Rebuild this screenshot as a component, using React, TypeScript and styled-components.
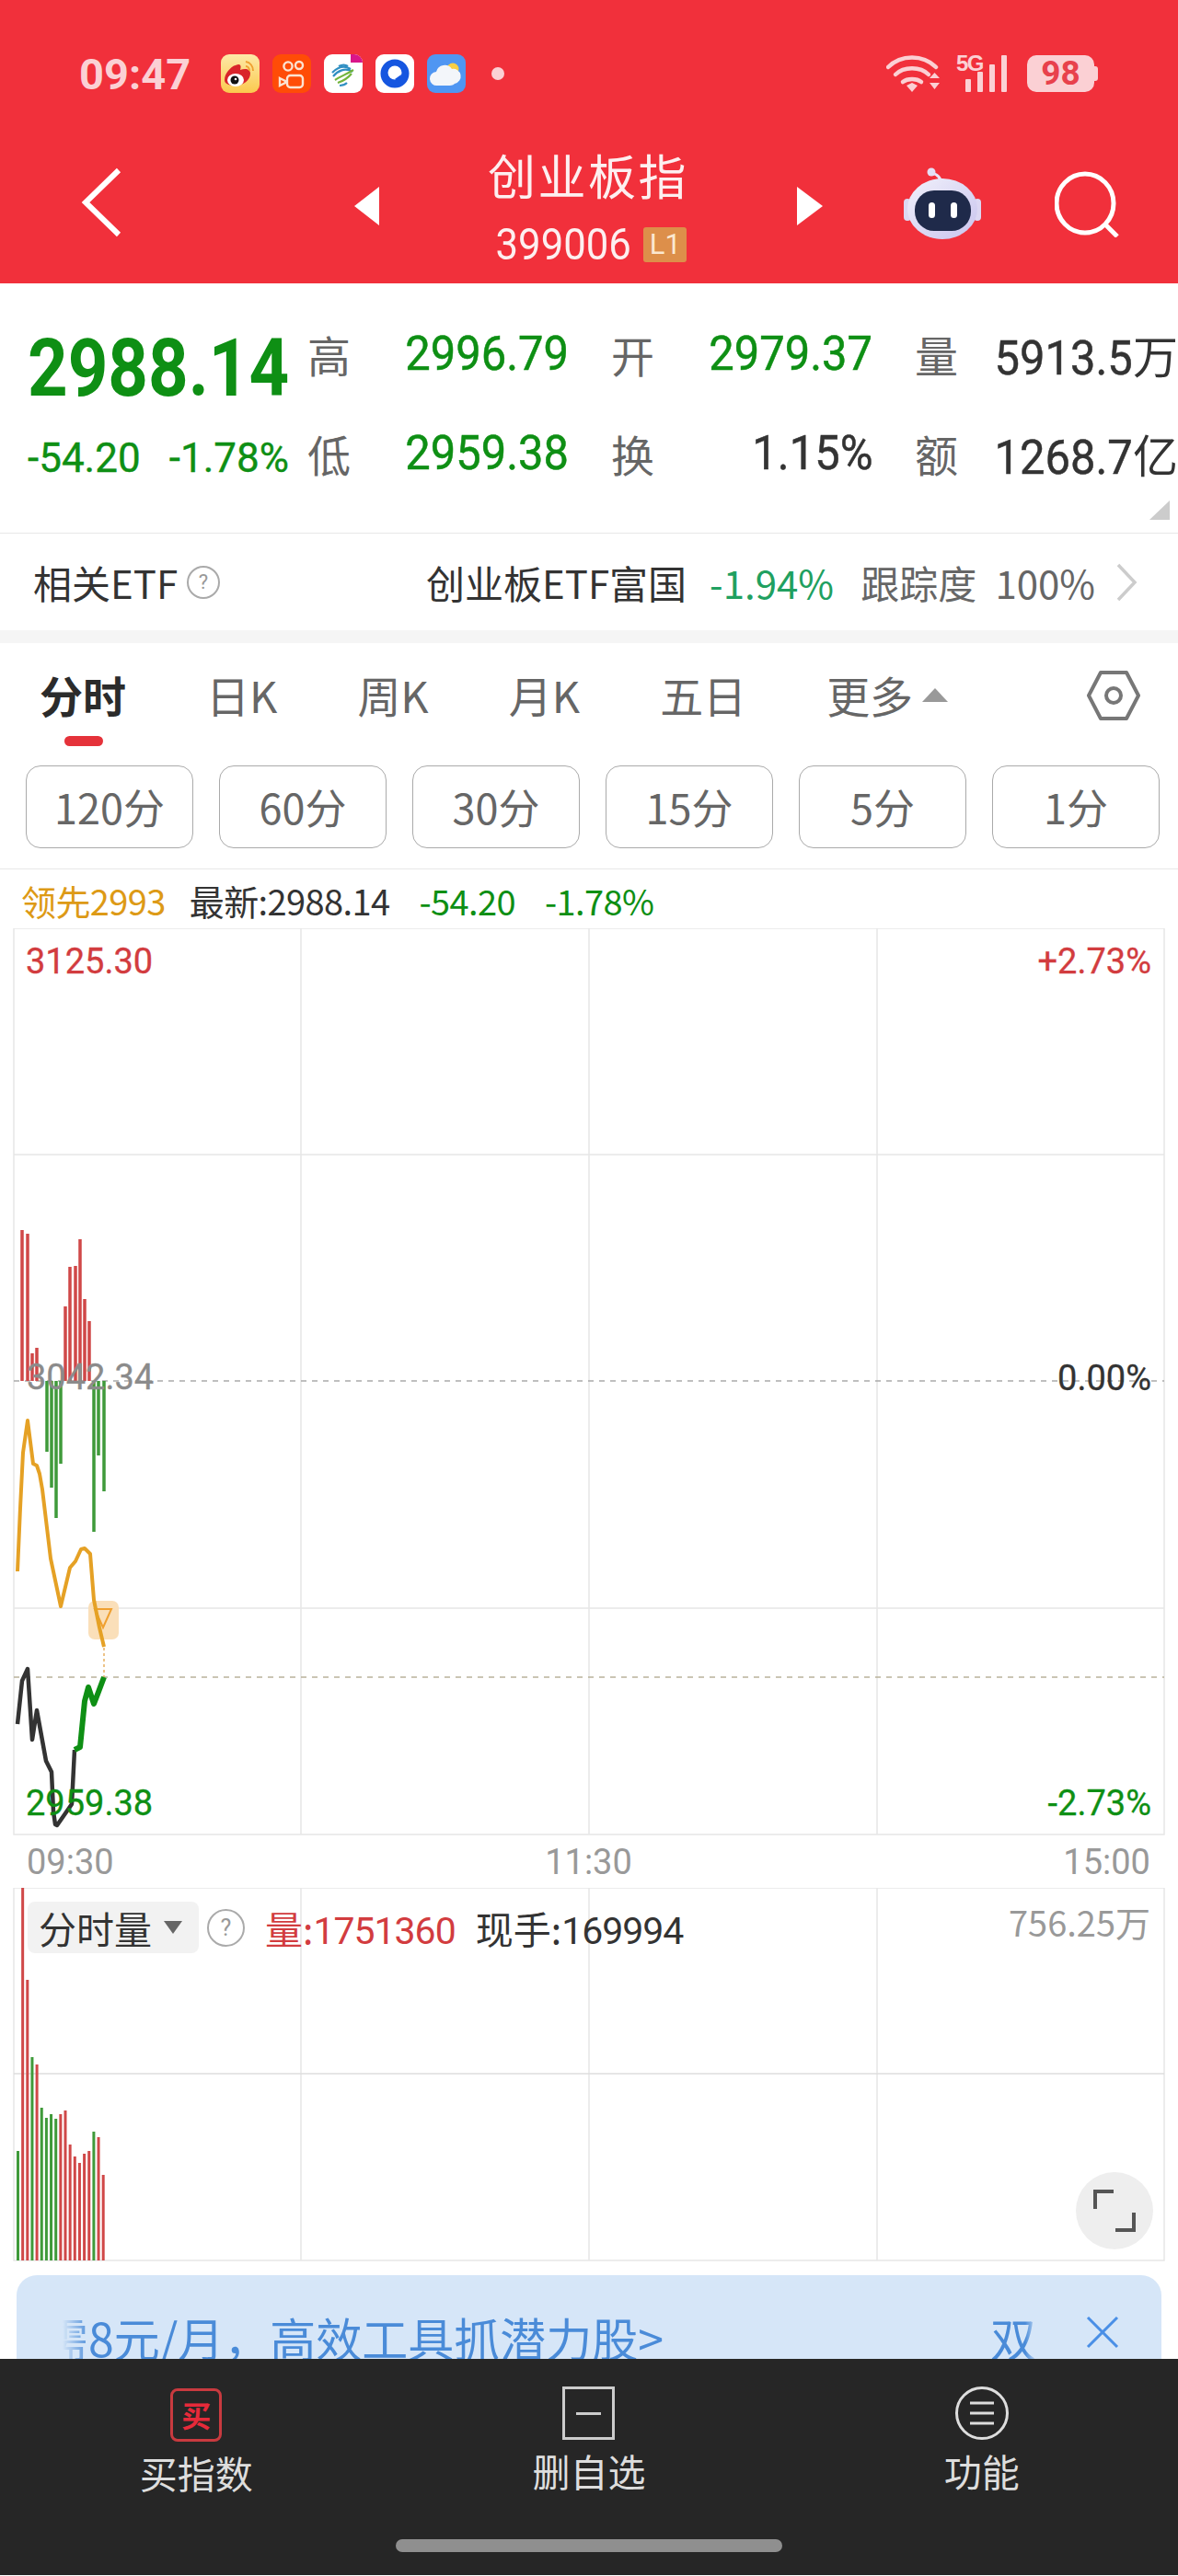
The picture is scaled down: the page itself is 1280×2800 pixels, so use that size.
import React from "react";
import styled, { createGlobalStyle } from "styled-components";

const CJK = `"Noto Sans CJK SC", "Noto Sans", sans-serif`;
const DIGITS = `Roboto, "Noto Sans CJK SC", sans-serif`;
const GREEN = "#0e8f14";
const RED = "#d23c3f";

const Global = createGlobalStyle`
  html, body { margin: 0; padding: 0; background: #fff; }
  body { font-family: ${CJK}; }
`;

const redBars = [
  [24, 1338], [30, 1342], [35, 1472], [40, 1466], [71, 1421],
  [76, 1378], [82, 1377], [87, 1348], [92, 1413], [97, 1437],
];
const greenBars = [
  [51, 1579], [56, 1618], [61, 1651], [66, 1592], [102, 1666], [107, 1583], [113, 1622],
];
const volBars: [string, number][] = [
  ["g", 2339], ["r", 2053], ["r", 2153], ["g", 2237], ["r", 2245], ["g", 2292], ["g", 2303],
  ["g", 2299], ["g", 2304], ["r", 2299], ["r", 2295], ["r", 2332], ["r", 2345], ["r", 2352],
  ["r", 2342], ["r", 2339], ["g", 2318], ["r", 2324], ["r", 2365],
];
const orangeLine =
  "19,1709 22,1640 25,1580 30,1545 36,1592 40,1594 43,1603 46,1620 55,1695 66,1747 76,1705 82,1698 88,1685 92,1684 98,1690 102,1740 108,1770 113,1791";
const blackLine =
  "19,1875 24,1828 30,1815 35,1892 40,1860 50,1915 56,1927 58,1970 60,1984 62,1985 78,1962 81,1903";
const greenLine = "81,1903 87,1900 92,1850 96,1835 102,1853 107,1840 113,1824";

const periods = ["120分", "60分", "30分", "15分", "5分", "1分"];

const WeiboIcon = () => (
  <svg width="42" height="42" viewBox="0 0 42 42">
    <defs>
      <linearGradient id="wb" x1="0" y1="0" x2="0" y2="1">
        <stop offset="0" stopColor="#fde9a8" />
        <stop offset="1" stopColor="#fbc94e" />
      </linearGradient>
    </defs>
    <rect width="42" height="42" rx="9" fill="url(#wb)" />
    <path d="M4 28c0-8 8-16 15-17 3 0 3 3 2 6 6-2 11-1 11 4 0 7-8 13-16 13-7 0-12-2-12-6z" fill="#d9242a" />
    <ellipse cx="16" cy="28" rx="9" ry="7" fill="#fff" />
    <circle cx="15" cy="28" r="4.5" fill="#111" />
    <circle cx="16" cy="27" r="1.3" fill="#fff" />
    <path d="M27 8c5 1 8 5 8 10M27 13c2 0 4 2 4 5" stroke="#f0a030" strokeWidth="2" fill="none" />
  </svg>
);

const KuaishouIcon = () => (
  <svg width="42" height="42" viewBox="0 0 42 42">
    <rect width="42" height="42" rx="9" fill="#ff4c07" />
    <g stroke="#fbe3d2" strokeWidth="2.4" fill="none">
      <circle cx="17" cy="13" r="4.6" />
      <circle cx="29" cy="12" r="4" />
      <rect x="16" y="23" width="17" height="13" rx="3.5" />
      <path d="M8 26l6 3v2l-6 3z" />
    </g>
  </svg>
);

const MobileIcon = () => (
  <svg width="42" height="42" viewBox="0 0 42 42">
    <rect width="42" height="42" rx="9" fill="#fff" />
    <path d="M29 0h4a9 9 0 0 1 9 9H29z" fill="#d9168a" />
    <g fill="none" strokeWidth="2.2">
      <path d="M9 20c5-5 12-9 20-4M10 24c5-6 13-10 21-5" stroke="#2f8fc2" />
      <path d="M12 28c6-4 12-6 20-11M15 31c6-2 11-5 15-10" stroke="#72b43c" />
      <path d="M16 13c4-2 7-2 10 0M17 34c3 0 6-1 8-3" stroke="#2f8fc2" />
    </g>
  </svg>
);

const QuarkIcon = () => (
  <svg width="42" height="42" viewBox="0 0 42 42">
    <rect width="42" height="42" rx="9" fill="#fff" />
    <circle cx="21" cy="21" r="15.5" fill="#1556e0" />
    <circle cx="21" cy="20" r="7.5" fill="#fff" />
    <path d="M21 27l6 4 1-9z" fill="#1556e0" />
  </svg>
);

const WeatherIcon = () => (
  <svg width="42" height="42" viewBox="0 0 42 42">
    <rect width="42" height="42" rx="9" fill="#4f96f2" />
    <circle cx="28" cy="16" r="6.5" fill="#f8cf45" />
    <path d="M11 34a7.5 7.5 0 0 1-1-15 9.500 9.500 0 0 1 17-3 8 8 0 0 1 3 16c-2 2-5 2-7 2z" fill="#f3f6fa" />
  </svg>
);

const WifiIcon = () => (
  <svg width="58" height="42" viewBox="0 0 58 42">
    <g fill="none" stroke="#fbd0d4" strokeWidth="4.500" strokeLinecap="round">
      <path d="M2 14c14-14 38-14 52 0" />
      <path d="M10 22c9-9 27-9 36 0" />
      <path d="M18 30c5-4 15-4 20 0" />
    </g>
    <path d="M22 34l6-3 6 3-6 7z" fill="#fbd0d4" />
    <path d="M47 26h11l-5.500-6zM47 31h11l-5.500 7z" fill="#fbd0d4" />
  </svg>
);

const SignalIcon = () => (
  <SignalBox>
    <FiveG>5G</FiveG>
    <svg width="56" height="42" viewBox="0 0 56 42">
      <g fill="#fbd0d4">
        <rect x="10" y="27" width="6" height="14" rx="1" />
        <rect x="23" y="19" width="6" height="22" rx="1" />
        <rect x="36" y="11" width="6" height="30" rx="1" />
        <rect x="49" y="1" width="6" height="40" rx="1" />
      </g>
    </svg>
  </SignalBox>
);

const RobotIcon = () => (
  <svg width="84" height="78" viewBox="0 0 84 78">
    <defs>
      <linearGradient id="rb" x1="0" y1="0" x2="1" y2="1">
        <stop offset="0" stopColor="#f1f1fb" />
        <stop offset="1" stopColor="#c9c4ee" />
      </linearGradient>
    </defs>
    <path d="M31 6c3 2 7 1 9 8" stroke="#e9e4f6" strokeWidth="3" fill="none" />
    <circle cx="30" cy="5" r="4.500" fill="#e4dff5" />
    <rect x="0" y="34" width="8" height="24" rx="4" fill="#dcd8f3" />
    <rect x="76" y="34" width="8" height="24" rx="4" fill="#dcd8f3" />
    <ellipse cx="42" cy="45" rx="38" ry="33" fill="url(#rb)" />
    <rect x="12" y="25" width="61" height="44" rx="21" fill="#1f2a4a" />
    <rect x="27" y="38" width="7" height="17" rx="3.500" fill="#fff" />
    <rect x="51" y="38" width="7" height="17" rx="3.500" fill="#fff" />
  </svg>
);

const App: React.FC = () => {
  return (
    <Page>
      <Global />
      <Header>
        <StatusBar>
          <Clock>09:47</Clock>
          <AppIcons>
            <WeiboIcon />
            <KuaishouIcon />
            <MobileIcon />
            <QuarkIcon />
            <WeatherIcon />
          </AppIcons>
          <StatusDot />
          <StatusRight>
            <WifiIcon />
            <SignalIcon />
            <Battery>
              98
              <BatteryNub />
            </Battery>
          </StatusRight>
        </StatusBar>
        <NavBar>
          <BackIcon width="48" height="78" viewBox="0 0 48 78">
            <path d="M42 4L6 39l36 35" fill="none" stroke="#fff" strokeWidth="6" />
          </BackIcon>
          <ArrowLeft />
          <TitleBlock>
            <Title>创业板指</Title>
            <CodeRow>
              <Code>399006</Code>
              <LevelBadge>L1</LevelBadge>
            </CodeRow>
          </TitleBlock>
          <ArrowRight />
          <RobotBox>
            <RobotIcon />
          </RobotBox>
          <svg width="70" height="76" viewBox="0 0 70 76">
            <ellipse cx="33" cy="39" rx="31" ry="32" fill="none" stroke="#fff" strokeWidth="5" />
            <path d="M55 62l13 13" stroke="#fff" strokeWidth="5" />
          </svg>
        </NavBar>
      </Header>

      <Summary>
        <PriceBlock>
          <BigPrice>2988.14</BigPrice>
          <ChangeRow>
            <Change>-54.20</Change>
            <Change>-1.78%</Change>
          </ChangeRow>
        </PriceBlock>
        <StatGrid>
          <Stat>
            <StatLabel>高</StatLabel>
            <StatValue $color={GREEN}>2996.79</StatValue>
          </Stat>
          <Stat>
            <StatLabel>开</StatLabel>
            <StatValue $color={GREEN}>2979.37</StatValue>
          </Stat>
          <Stat>
            <StatLabel>量</StatLabel>
            <StatText>
              <StatValue>5913.5</StatValue>万
            </StatText>
          </Stat>
          <Stat>
            <StatLabel>低</StatLabel>
            <StatValue $color={GREEN}>2959.38</StatValue>
          </Stat>
          <Stat>
            <StatLabel>换</StatLabel>
            <StatValue>1.15%</StatValue>
          </Stat>
          <Stat>
            <StatLabel>额</StatLabel>
            <StatText>
              <StatValue>1268.7</StatValue>亿
            </StatText>
          </Stat>
        </StatGrid>
        <CornerMark />
      </Summary>

      <EtfRow>
        <EtfLabel>相关ETF</EtfLabel>
        <HelpDot $size={36}>?</HelpDot>
        <EtfName>创业板ETF富国</EtfName>
        <EtfChange>-1.94%</EtfChange>
        <EtfTrack>跟踪度</EtfTrack>
        <EtfPercent>100%</EtfPercent>
        <svg width="24" height="42" viewBox="0 0 24 42">
          <path d="M3 2l18 19L3 40" fill="none" stroke="#ccc" strokeWidth="3.500" />
        </svg>
      </EtfRow>
      <Band />

      <Tabs>
        <Tab $active>分时</Tab>
        <Tab>日K</Tab>
        <Tab>周K</Tab>
        <Tab>月K</Tab>
        <Tab>五日</Tab>
        <Tab>
          更多
          <TabCaret />
        </Tab>
        <SettingsIcon width="58" height="56" viewBox="0 0 58 56">
          <path d="M15 3h28l13 25-13 25H15L2 28z" fill="none" stroke="#777" strokeWidth="4" strokeLinejoin="round" />
          <circle cx="29" cy="28" r="8" fill="none" stroke="#777" strokeWidth="4" />
        </SettingsIcon>
      </Tabs>

      <Periods>
        {periods.map((p) => (
          <PeriodButton key={p}>{p}</PeriodButton>
        ))}
      </Periods>

      <Legend>
        <LegendItem $color="#dd9a16" $left={23}>领先2993</LegendItem>
        <LegendItem $color="#333" $left={26}>最新:2988.14</LegendItem>
        <LegendItem $color={GREEN} $left={32}>-54.20</LegendItem>
        <LegendItem $color={GREEN} $left={32}>-1.78%</LegendItem>
      </Legend>

      <PriceChart>
        <svg width="1280" height="986" viewBox="0 1010 1280 986" style={{ display: "block" }}>
          <g stroke="#e6e6e6" strokeWidth="1.500" fill="none">
            <rect x="15" y="1010" width="1250" height="985" />
            <path d="M327 1010v985M640 1010v985M953 1010v985" />
            <path d="M15 1256h1250M15 1749h1250" />
          </g>
          <path d="M15 1502h1250" stroke="#aaa" strokeWidth="1.500" strokeDasharray="6 6" />
          <path d="M15 1824h1250" stroke="#b9b29a" strokeWidth="1.500" strokeDasharray="6 6" />
          {redBars.map(([x, top]) => (
            <rect key={x} x={x - 1.75} y={top} width="3.500" height={1502 - top} fill="#d04848" />
          ))}
          {greenBars.map(([x, bottom]) => (
            <rect key={x} x={x - 1.75} y="1502" width="3.500" height={bottom - 1502} fill="#3f9a3a" />
          ))}
          <rect x="96" y="1741" width="33" height="42" rx="7" fill="#fadfb9" />
          <path d="M103 1750h18l-9 20z" fill="none" stroke="#f0a030" strokeWidth="2" />
          <path d="M113 1792v32" stroke="#e8b060" strokeWidth="1.500" strokeDasharray="3 3" />
          <polyline points={orangeLine} fill="none" stroke="#e5a125" strokeWidth="4" strokeLinejoin="round" />
          <polyline points={blackLine} fill="none" stroke="#333" strokeWidth="4.500" strokeLinejoin="round" />
          <polyline points={greenLine} fill="none" stroke={GREEN} strokeWidth="6" strokeLinejoin="round" />
        </svg>
        <AxisLabel $color={RED} $left={28} $top={15}>3125.30</AxisLabel>
        <AxisLabel $color={RED} $right={29} $top={15}>+2.73%</AxisLabel>
        <AxisLabel $color="#8b8b8b" $left={29} $top={467}>3042.34</AxisLabel>
        <AxisLabel $color="#333" $right={29} $top={468}>0.00%</AxisLabel>
        <AxisLabel $color={GREEN} $left={28} $top={930}>2959.38</AxisLabel>
        <AxisLabel $color={GREEN} $right={29} $top={930}>-2.73%</AxisLabel>
      </PriceChart>

      <TimeAxis>
        <span>09:30</span>
        <span>11:30</span>
        <span>15:00</span>
      </TimeAxis>

      <VolumeChart>
        <svg width="1280" height="406" viewBox="0 2053 1280 406" style={{ display: "block" }}>
          <g stroke="#e6e6e6" strokeWidth="1.500" fill="none">
            <rect x="15" y="2053" width="1250" height="405" />
            <path d="M327 2053v405M640 2053v405M953 2053v405" />
            <path d="M15 2255h1250" stroke="#dedede" />
          </g>
          {volBars.map(([c, top], i) => (
            <rect
              key={i}
              x={18 + 5.15 * i}
              y={top}
              width="3"
              height={2458 - top}
              fill={c === "r" ? "#d04848" : "#3f9a3a"}
            />
          ))}
        </svg>
        <VolumeOverlay>
          <VolumePill>
            分时量
            <PillCaret />
          </VolumePill>
          <HelpDot $size={41}>?</HelpDot>
          <VolumeStat $color={RED}>
            量:<VolumeNum>1751360</VolumeNum>
          </VolumeStat>
          <VolumeStat $color="#333">
            现手:<VolumeNum>169994</VolumeNum>
          </VolumeStat>
        </VolumeOverlay>
        <VolumeMax>756.25万</VolumeMax>
        <ExpandButton>
          <svg width="46" height="46" viewBox="0 0 46 46">
            <path d="M2 21V2h20M44 25v19H24" fill="none" stroke="#555" strokeWidth="4" />
          </svg>
        </ExpandButton>
      </VolumeChart>

      <Banner>
        <Marquee>
          <MarqueeText>仅需8元/月，高效工具抓潜力股&gt;</MarqueeText>
          <MarqueeNext>双</MarqueeNext>
        </Marquee>
        <svg width="36" height="36" viewBox="0 0 36 36">
          <path d="M2 2l32 32M34 2L2 34" stroke="#4a8fe6" strokeWidth="3" />
        </svg>
      </Banner>

      <BottomNav>
        <NavItems>
          <NavItem>
            <BuyIcon>买</BuyIcon>
            <NavLabel>买指数</NavLabel>
          </NavItem>
          <NavItem>
            <MinusIcon />
            <NavLabel>删自选</NavLabel>
          </NavItem>
          <NavItem>
            <svg width="60" height="58" viewBox="0 0 60 58">
              <circle cx="30" cy="29" r="27.500" fill="none" stroke="#ddd" strokeWidth="3" />
              <path d="M17 18h26M17 29h26M17 40h26" stroke="#ddd" strokeWidth="3" />
            </svg>
            <NavLabel>功能</NavLabel>
          </NavItem>
        </NavItems>
        <HomeIndicator />
      </BottomNav>
    </Page>
  );
};

export default App;

const Page = styled.div`
  width: 1280px;
  height: 2800px;
  display: flex;
  flex-direction: column;
  overflow: hidden;
  background: #fff;
`;

const Header = styled.header`
  height: 308px;
  box-sizing: border-box;
  padding-top: 59px;
  background: #f1303b;
`;

const StatusBar = styled.div`
  height: 42px;
  display: flex;
  align-items: center;
  padding-left: 86px;
  color: #fbd0d4;
`;

const Clock = styled.div`
  width: 154px;
  font: 700 47px ${DIGITS};
`;

const AppIcons = styled.div`
  display: flex;
  gap: 14px;
  svg {
    display: block;
  }
`;

const StatusDot = styled.div`
  width: 14px;
  height: 14px;
  margin-left: 28px;
  border-radius: 50%;
  background: #fbd0d4;
`;

const StatusRight = styled.div`
  margin-left: auto;
  margin-right: 91px;
  display: flex;
  align-items: center;
  svg {
    display: block;
  }
`;

const SignalBox = styled.div`
  position: relative;
  width: 56px;
  height: 42px;
  margin: 0 21px 0 18px;
`;

const FiveG = styled.span`
  position: absolute;
  left: 0;
  top: -3px;
  font: 700 24px/26px "Liberation Sans", sans-serif;
  letter-spacing: -1.5px;
`;

const Battery = styled.div`
  position: relative;
  width: 73px;
  height: 40px;
  border-radius: 10px;
  background: #fbd0d4;
  color: #e8414c;
  font: 700 37px/40px ${DIGITS};
  text-align: center;
`;

const BatteryNub = styled.span`
  position: absolute;
  right: -4px;
  top: 12px;
  width: 4px;
  height: 16px;
  border-radius: 0 3px 3px 0;
  background: #fbd0d4;
`;

const NavBar = styled.div`
  height: 170px;
  margin-top: 34px;
  display: flex;
  align-items: center;
`;

const BackIcon = styled.svg`
  margin-left: 87px;
`;

const ArrowLeft = styled.div`
  width: 0;
  height: 0;
  margin-left: 250px;
  margin-top: 8px;
  border-style: solid;
  border-width: 21px 27px 21px 0;
  border-color: transparent #fff transparent transparent;
`;

const ArrowRight = styled.div`
  width: 0;
  height: 0;
  margin-top: 8px;
  border-style: solid;
  border-width: 21px 0 21px 28px;
  border-color: transparent transparent transparent #fff;
`;

const TitleBlock = styled.div`
  width: 454px;
  display: flex;
  flex-direction: column;
  align-items: center;
  margin-top: 5px;
  color: #fdeff0;
`;

const Title = styled.div`
  font-size: 52px;
  line-height: 70px;
  letter-spacing: 2.500px;
`;

const CodeRow = styled.div`
  display: flex;
  align-items: center;
  gap: 14px;
  margin-top: 17px;
  margin-left: 4px;
`;

const Code = styled.span`
  display: inline-block;
  font: 400 48px/48px ${DIGITS};
  transform: scaleX(0.91);
  transform-origin: right center;
  margin-left: -12px;
`;

const LevelBadge = styled.span`
  width: 47px;
  height: 38px;
  border-radius: 3px;
  background: #dd8f4a;
  color: #fbe8d0;
  font: 400 31px/38px ${DIGITS};
  text-align: center;
`;

const RobotBox = styled.div`
  margin-left: 88px;
  margin-right: 80px;
  margin-top: 2px;
  svg {
    display: block;
  }
`;

const Summary = styled.section`
  position: relative;
  height: 272px;
  box-sizing: border-box;
  display: flex;
  padding: 22px 0 0 30px;
  border-bottom: 1px solid #e8e8e8;
`;

const PriceBlock = styled.div`
  width: 304px;
  color: ${GREEN};
`;

const BigPrice = styled.div`
  font: 700 88px/100px ${DIGITS};
  height: 100px;
  margin-top: 20px;
  transform: scaleX(0.865);
  transform-origin: left center;
  white-space: nowrap;
`;

const ChangeRow = styled.div`
  display: flex;
  justify-content: space-between;
  width: 284px;
  margin-top: 23px;
  font: 400 44px/50px ${DIGITS};
`;

const Change = styled.span`
  display: inline-block;
  -webkit-text-stroke: 0.4px currentColor;
`;

const StatGrid = styled.div`
  display: grid;
  grid-template-columns: 284px 284px 286px;
  column-gap: 46px;
  grid-auto-rows: 108px;
`;

const Stat = styled.div`
  display: flex;
  align-items: center;
  justify-content: space-between;
`;

const StatLabel = styled.span`
  font-size: 47px;
  color: #666;
`;

const StatValue = styled.span<{ $color?: string }>`
  display: inline-block;
  position: relative;
  top: 1px;
  font: 400 52px/60px ${DIGITS};
  color: ${(p) => p.$color || "#333"};
  transform: scaleX(0.94);
  transform-origin: right center;
  -webkit-text-stroke: 0.5px currentColor;
`;

const StatText = styled.span`
  font-size: 49px;
  color: #333;
  white-space: nowrap;
`;

const CornerMark = styled.div`
  position: absolute;
  right: 9px;
  bottom: 14px;
  width: 0;
  height: 0;
  border-style: solid;
  border-width: 0 0 21px 22px;
  border-color: transparent transparent #ccc transparent;
`;

const EtfRow = styled.section`
  height: 105px;
  display: flex;
  align-items: center;
  padding: 0 44px 0 36px;
  font-size: 42px;
  color: #333;
  white-space: nowrap;
`;

const EtfLabel = styled.span`
  width: 167px;
`;

const HelpDot = styled.span<{ $size: number }>`
  flex: none;
  box-sizing: border-box;
  width: ${(p) => p.$size}px;
  height: ${(p) => p.$size}px;
  border: 2px solid #aaa;
  border-radius: 50%;
  color: #999;
  font: 400 ${(p) => Math.round(p.$size * 0.62)}px/${(p) => p.$size - 4}px ${DIGITS};
  text-align: center;
`;

const EtfName = styled.span`
  margin-left: 224px;
`;

const EtfChange = styled.span`
  margin-left: 25px;
  color: #20a060;
`;

const EtfTrack = styled.span`
  margin-left: auto;
  color: #666;
`;

const EtfPercent = styled.span`
  margin-left: 20px;
  margin-right: 22px;
  color: #666;
`;

const Band = styled.div`
  height: 14px;
  background: #f5f5f5;
`;

const Tabs = styled.nav`
  position: relative;
  height: 133px;
  box-sizing: border-box;
  display: flex;
  align-items: flex-start;
  gap: 87px;
  padding: 24px 0 0 43px;
`;

const Tab = styled.div<{ $active?: boolean }>`
  position: relative;
  display: flex;
  align-items: center;
  font-size: 47px;
  line-height: 64px;
  font-weight: ${(p) => (p.$active ? 700 : 400)};
  color: ${(p) => (p.$active ? "#2b2b2b" : "#666")};

  ${(p) =>
    p.$active &&
    `&::after {
      content: "";
      position: absolute;
      left: 27px;
      top: 77px;
      width: 42px;
      height: 11px;
      border-radius: 6px;
      background: #e5323a;
    }`}
`;

const TabCaret = styled.span`
  width: 0;
  height: 0;
  margin-left: 10px;
  border-style: solid;
  border-width: 0 14px 15px 14px;
  border-color: transparent transparent #999 transparent;
`;

const SettingsIcon = styled.svg`
  position: absolute;
  right: 41px;
  top: 29px;
`;

const Periods = styled.div`
  height: 113px;
  box-sizing: border-box;
  display: flex;
  gap: 28px;
  padding-left: 28px;
  border-bottom: 1px solid #e8e8e8;
`;

const PeriodButton = styled.div`
  width: 182px;
  height: 90px;
  box-sizing: border-box;
  border: 1px solid #aaa;
  border-radius: 16px;
  color: #666;
  font-size: 45px;
  line-height: 88px;
  text-align: center;
`;

const Legend = styled.div`
  height: 64px;
  display: flex;
  align-items: center;
  padding-top: 2px;
  box-sizing: border-box;
  font-size: 38px;
  letter-spacing: -0.6px;
`;

const LegendItem = styled.span<{ $color: string; $left: number }>`
  margin-left: ${(p) => p.$left}px;
  color: ${(p) => p.$color};
`;

const PriceChart = styled.div`
  position: relative;
  height: 986px;
`;

const AxisLabel = styled.span<{ $color: string; $left?: number; $right?: number; $top: number }>`
  position: absolute;
  top: ${(p) => p.$top}px;
  ${(p) => (p.$left !== undefined ? `left: ${p.$left}px;` : `right: ${p.$right}px;`)}
  color: ${(p) => p.$color};
  font: 400 38px/42px ${DIGITS};
  -webkit-text-stroke: 0.3px currentColor;
`;

const TimeAxis = styled.div`
  height: 57px;
  display: flex;
  justify-content: space-between;
  align-items: center;
  padding: 0 30px 0 29px;
  color: #999;
  font: 400 38px/42px ${DIGITS};
`;

const VolumeChart = styled.div`
  position: relative;
  height: 406px;
`;

const VolumeOverlay = styled.div`
  position: absolute;
  left: 30px;
  top: 13px;
  display: flex;
  align-items: center;
`;

const VolumePill = styled.div`
  width: 186px;
  height: 56px;
  box-sizing: border-box;
  display: flex;
  align-items: center;
  padding-left: 12px;
  border-radius: 8px;
  background: #f2f2f2;
  color: #333;
  font-size: 41px;
  margin-right: 9px;
`;

const PillCaret = styled.span`
  width: 0;
  height: 0;
  margin-left: 13px;
  border-style: solid;
  border-width: 14px 10px 0 10px;
  border-color: #666 transparent transparent transparent;
`;

const VolumeStat = styled.span<{ $color: string }>`
  margin-left: 22px;
  color: ${(p) => p.$color};
  font-size: 41px;
  white-space: nowrap;
`;

const VolumeNum = styled.span`
  font: 400 41px ${DIGITS};
  letter-spacing: -1px;
`;

const VolumeMax = styled.span`
  position: absolute;
  right: 30px;
  top: 12px;
  color: #999;
  font-size: 38px;
  line-height: 50px;
`;

const ExpandButton = styled.div`
  position: absolute;
  left: 1169px;
  top: 309px;
  width: 84px;
  height: 84px;
  display: flex;
  align-items: center;
  justify-content: center;
  border-radius: 50%;
  background: #eee;
`;

const Banner = styled.section`
  height: 91px;
  box-sizing: border-box;
  margin: 15px 18px 0;
  padding: 44px 46px 0 50px;
  display: flex;
  align-items: flex-start;
  overflow: hidden;
  border-radius: 22px 22px 0 0;
  background: #d6e6f8;
  color: #4a8bd8;
`;

const Marquee = styled.div`
  flex: 1;
  display: flex;
  justify-content: space-between;
  margin-right: 52px;
  overflow: hidden;
  font-size: 50px;
  line-height: 47px;
  white-space: nowrap;
  mask-image: linear-gradient(to right, transparent, #000 30px, #000 calc(100% - 14px), transparent);
`;

const MarqueeText = styled.span`
  margin-left: -72px;
`;

const MarqueeNext = styled.span`
  margin-right: 2px;
`;

const BottomNav = styled.footer`
  height: 235px;
  background: #262626;
  display: flex;
  flex-direction: column;
`;

const NavItems = styled.div`
  display: grid;
  grid-template-columns: repeat(3, 1fr);
  padding-top: 30px;
`;

const NavItem = styled.div`
  height: 130px;
  display: flex;
  flex-direction: column;
  align-items: center;
`;

const BuyIcon = styled.div`
  width: 56px;
  height: 58px;
  box-sizing: border-box;
  margin-top: 2px;
  border: 3px solid #c93a3f;
  border-radius: 8px;
  color: #e62a3a;
  font-size: 32px;
  font-weight: 700;
  line-height: 50px;
  text-align: center;
`;

const MinusIcon = styled.div`
  position: relative;
  width: 57px;
  height: 58px;
  box-sizing: border-box;
  border: 3px solid #ccc;

  &::after {
    content: "";
    position: absolute;
    left: 12px;
    right: 12px;
    top: 25px;
    height: 3px;
    background: #ccc;
  }
`;

const NavLabel = styled.div`
  margin-top: 8px;
  color: #ddd;
  font-size: 41px;
  line-height: 50px;
`;

const HomeIndicator = styled.div`
  width: 420px;
  height: 14px;
  margin: 36px auto 0;
  border-radius: 7px;
  background: #8f8f8f;
`;
